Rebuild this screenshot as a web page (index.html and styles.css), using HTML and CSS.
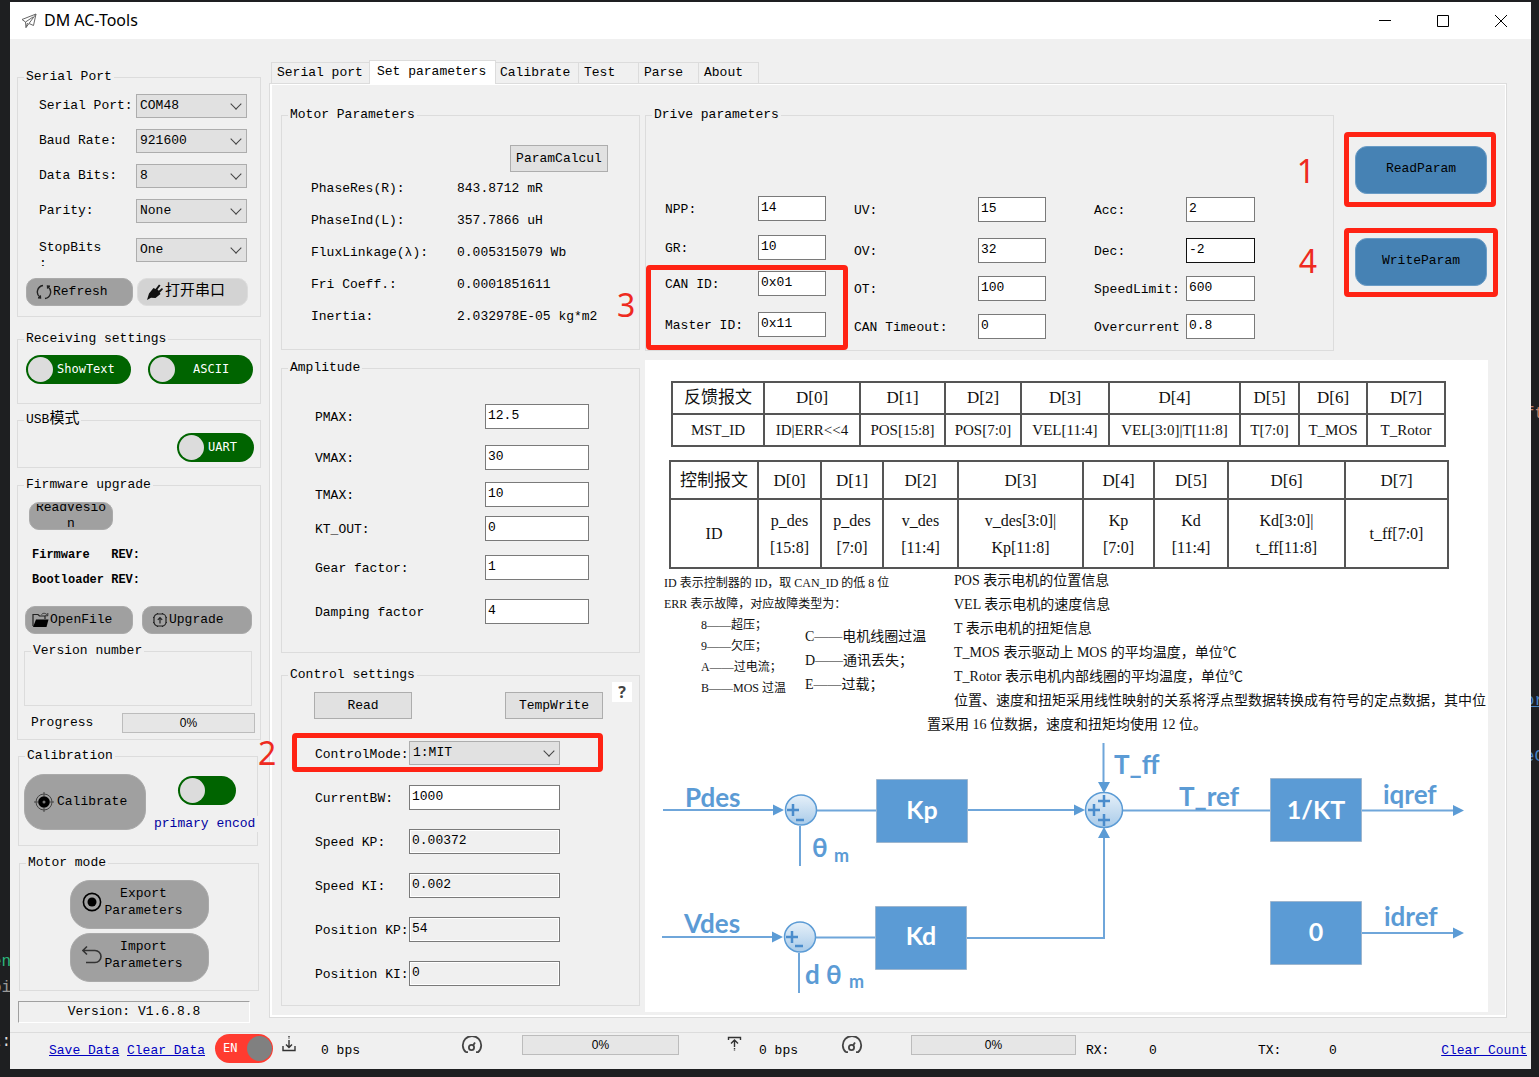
FILE: index.html
```html
<!DOCTYPE html>
<html lang="en">
<head>
<meta charset="utf-8">
<title>DM AC-Tools</title>
<link rel="stylesheet" href="styles.css">
</head>
<body>
<div class="desktop" aria-hidden="true">
  <span class="code code-green">en</span>
  <span class="code code-grey">oi</span>
  <span class="code code-white">t:</span>
  <span class="code code-orange">ft</span>
  <span class="code code-link">or</span>
  <span class="code code-blue">eC</span>
</div>
<div class="window">
  <header class="titlebar">
    <svg class="app-icon" viewBox="0 0 16 16" width="16" height="16" fill="none" stroke="#666" stroke-width="1"><path d="M1 6.500 15 1l-2.500 11.500-4.500-2-3 4-.5-5.500zM4.500 9 12 4M8 10.500 15 1M5 14.500l1.500-4.500"/></svg>
    <h1>DM AC-Tools</h1>
    <div class="window-buttons">
      <button type="button" aria-label="Minimize"><svg viewBox="0 0 14 14" width="14" height="14" stroke="#000"><path d="M1 6.500h12"/></svg></button>
      <button type="button" aria-label="Maximize"><svg viewBox="0 0 14 14" width="14" height="14" fill="none" stroke="#000"><path d="M1.500 1.500h11v11h-11z"/></svg></button>
      <button type="button" aria-label="Close"><svg viewBox="0 0 14 14" width="14" height="14" stroke="#000"><path d="M1 1l12 12M13 1 1 13"/></svg></button>
    </div>
  </header>

  <div class="workspace">
    <aside class="sidebar">
      <fieldset>
        <legend>Serial Port</legend>
        <div class="port-body">
          <div class="port-grid">
            <label for="port">Serial Port:</label>
            <span class="select"><select id="port"><option>COM48</option></select></span>
            <label for="baud">Baud Rate:</label>
            <span class="select"><select id="baud"><option>921600</option></select></span>
            <label for="bits">Data Bits:</label>
            <span class="select"><select id="bits"><option>8</option></select></span>
            <label for="parity">Parity:</label>
            <span class="select"><select id="parity"><option>None</option></select></span>
            <label for="stop" class="stop-label">StopBits :</label>
            <span class="select"><select id="stop"><option>One</option></select></span>
          </div>
          <div class="button-row">
            <button type="button" class="pill">
              <svg viewBox="0 0 16 16" width="16" height="16" fill="none" stroke="#222" stroke-width="1.400"><path d="M7 1.500A6.600 6.600 0 0 0 4 13.300M9 14.500A6.600 6.600 0 0 0 12 2.700"/><path d="M2 13.800 4.500 14l-.2-2.600M14 2.200 11.500 2l.2 2.600"/></svg>
              Refresh</button>
            <button type="button" class="pill pill-light">
              <svg viewBox="0 0 16 16" width="16" height="16"><path d="M0 16 2 9.500 6.500 4l2 1L12 .5l1.500 1-3 4 1.300 1.200L15 4l1 1.200-3.300 3.500.8 1.300-5 4L4 13.800z" fill="#111"/></svg>
              打开串口</button>
          </div>
        </div>
      </fieldset>

      <fieldset class="receiving">
        <legend>Receiving settings</legend>
        <div class="toggle-row">
          <label class="toggle"><input type="checkbox"><span class="knob"></span><span class="toggle-text">ShowText</span></label>
          <label class="toggle"><input type="checkbox"><span class="knob"></span><span class="toggle-text toggle-text-far">ASCII</span></label>
        </div>
      </fieldset>

      <fieldset class="usb">
        <legend>USB<span class="han">模式</span></legend>
        <div class="usb-row">
          <label class="toggle toggle-medium"><input type="checkbox"><span class="knob"></span><span class="toggle-text">UART</span></label>
        </div>
      </fieldset>

      <fieldset class="firmware">
        <legend>Firmware upgrade</legend>
        <div class="firmware-body">
          <button type="button" class="pill version-button"><span>ReadVesion</span></button>
          <p class="rev">Firmware   REV:</p>
          <p class="rev">Bootloader REV:</p>
          <div class="button-row">
            <button type="button" class="pill">
              <svg viewBox="0 0 17 16" width="17" height="16"><path d="M1 14V2.500h5l1.500 1.500H13v3" fill="none" stroke="#222" stroke-width="1.200"/><path d="M1 15 4 7.500h12.500L14.500 15z" fill="#000"/><path d="M9.500 2.500C11 .8 14 .8 15.500 3.500M15.800 1v2.800H13" fill="none" stroke="#333"/></svg>
              OpenFile</button>
            <button type="button" class="pill pill-upgrade">
              <svg viewBox="0 0 16 16" width="16" height="16" fill="none" stroke="#222" stroke-width="1.200"><rect x="2" y="2" width="12" height="12" rx="4"/><path d="M8 11.500V6M5.800 7.800 8 5.500l2.200 2.300"/><path d="M5.500 1v1M10.500 1v1M5.500 14v1M10.500 14v1M1 5.500h1M1 10.500h1M14 5.500h1M14 10.500h1"/></svg>
              Upgrade</button>
          </div>
          <fieldset class="version-box"><legend>Version number</legend></fieldset>
          <div class="progress-row">
            <span id="progress-label">Progress</span>
            <div class="progress" role="progressbar" aria-labelledby="progress-label" aria-valuenow="0">0%</div>
          </div>
        </div>
      </fieldset>

      <fieldset class="calibration">
        <legend>Calibration</legend>
        <div class="calibration-body">
          <button type="button" class="pill big-pill">
            <svg viewBox="0 0 20 20" width="20" height="20"><circle cx="10" cy="10" r="8" fill="none" stroke="#444"/><circle cx="10" cy="10" r="5.800" fill="#000"/><circle cx="10" cy="10" r="1.500" fill="#777"/><path d="M10 0v4M10 16v4M0 10h4M16 10h4" stroke="#444"/></svg>
            Calibrate</button>
          <div class="encoder">
            <label class="toggle toggle-small"><input type="checkbox" aria-label="primary encoder"><span class="knob"></span></label>
            <span class="encoder-name">primary encod</span>
          </div>
        </div>
      </fieldset>

      <fieldset class="motor-mode">
        <legend>Motor mode</legend>
        <div class="motor-body">
          <button type="button" class="pill motor-button">
            <svg viewBox="0 0 20 20" width="20" height="20"><circle cx="10" cy="10" r="8.600" fill="none" stroke="#000" stroke-width="1.600"/><circle cx="10" cy="10" r="4.500"/></svg>
            <span>Export<br>Parameters</span></button>
          <button type="button" class="pill motor-button">
            <svg viewBox="0 0 20 20" width="20" height="20" fill="none" stroke="#333" stroke-width="1.600"><path d="M5 1.500.8 5.500 5 9.500M1 5.500h12a6 6 0 0 1 0 12H4"/></svg>
            <span>Import<br>Parameters</span></button>
        </div>
      </fieldset>
      <p class="version">Version: V1.6.8.8</p>
    </aside>

    <main class="content">
      <div class="tabs" role="tablist">
        <button type="button" role="tab" class="tab tab-first">Serial port</button>
        <button type="button" role="tab" class="tab tab-active" aria-selected="true">Set parameters</button>
        <button type="button" role="tab" class="tab tab-calibrate">Calibrate</button>
        <button type="button" role="tab" class="tab">Test</button>
        <button type="button" role="tab" class="tab">Parse</button>
        <button type="button" role="tab" class="tab">About</button>
      </div>

      <div class="panel">
        <div class="left-column">
          <fieldset class="motor-params">
            <legend>Motor Parameters</legend>
            <div class="motor-params-body">
              <button type="button" class="button">ParamCalcul</button>
              <dl>
                <dt>PhaseRes(R):</dt><dd>843.8712 mR</dd>
                <dt>PhaseInd(L):</dt><dd>357.7866 uH</dd>
                <dt>FluxLinkage(λ):</dt><dd>0.005315079 Wb</dd>
                <dt>Fri Coeff.:</dt><dd>0.0001851611</dd>
                <dt>Inertia:</dt><dd>2.032978E-05 kg*m2</dd>
              </dl>
            </div>
          </fieldset>

          <fieldset class="amplitude">
            <legend>Amplitude</legend>
            <div class="amplitude-grid">
              <label for="pmax">PMAX:</label><input id="pmax" type="text" value="12.5">
              <label for="vmax">VMAX:</label><input id="vmax" type="text" value="30">
              <label for="tmax">TMAX:</label><input id="tmax" type="text" value="10">
              <label for="kt">KT_OUT:</label><input id="kt" type="text" value="0">
              <label for="gear">Gear factor:</label><input id="gear" type="text" value="1">
              <label for="damping">Damping factor</label><input id="damping" type="text" value="4">
            </div>
          </fieldset>

          <fieldset class="control">
            <legend>Control settings</legend>
            <button type="button" class="help" aria-label="Help">?</button>
            <div class="control-buttons">
              <button type="button" class="button">Read</button>
              <button type="button" class="button">TempWrite</button>
            </div>
            <div class="control-grid">
              <label for="mode">ControlMode:</label>
              <span class="select"><select id="mode"><option>1:MIT</option></select></span>
              <label for="bw">CurrentBW:</label><input id="bw" type="text" value="1000">
              <label for="skp">Speed KP:</label><input id="skp" type="text" value="0.00372" readonly>
              <label for="ski">Speed KI:</label><input id="ski" type="text" value="0.002" readonly>
              <label for="pkp">Position KP:</label><input id="pkp" type="text" value="54" readonly>
              <label for="pki">Position KI:</label><input id="pki" type="text" value="0" readonly>
            </div>
          </fieldset>
        </div>

        <div class="right-column">
          <div class="drive-row">
            <fieldset class="drive">
              <legend>Drive parameters</legend>
              <div class="drive-body">
                <div class="drive-col drive-ids">
                  <label for="npp">NPP:</label><input id="npp" type="text" value="14">
                  <label for="gr">GR:</label><input id="gr" type="text" value="10">
                  <label for="canid">CAN ID:</label><input id="canid" type="text" value="0x01">
                  <label for="master">Master ID:</label><input id="master" type="text" value="0x11">
                </div>
                <div class="drive-col drive-limits">
                  <label for="uv">UV:</label><input id="uv" type="text" value="15">
                  <label for="ov">OV:</label><input id="ov" type="text" value="32">
                  <label for="ot">OT:</label><input id="ot" type="text" value="100">
                  <label for="timeout">CAN Timeout:</label><input id="timeout" type="text" value="0">
                </div>
                <div class="drive-col drive-motion">
                  <label for="acc">Acc:</label><input id="acc" type="text" value="2">
                  <label for="dec">Dec:</label><input id="dec" type="text" class="hot" value="-2">
                  <label for="speed">SpeedLimit:</label><input id="speed" type="text" value="600">
                  <label for="over">Overcurrent</label><input id="over" type="text" value="0.8">
                </div>
              </div>
            </fieldset>
            <div class="actions">
              <button type="button" class="action">ReadParam</button>
              <button type="button" class="action">WriteParam</button>
            </div>
          </div>

          <figure class="reference">
            <table class="frame feedback">
              <tr><th>反馈报文</th><th>D[0]</th><th>D[1]</th><th>D[2]</th><th>D[3]</th><th>D[4]</th><th>D[5]</th><th>D[6]</th><th>D[7]</th></tr>
              <tr><td>MST_ID</td><td>ID|ERR&lt;&lt;4</td><td>POS[15:8]</td><td>POS[7:0]</td><td>VEL[11:4]</td><td>VEL[3:0]|T[11:8]</td><td>T[7:0]</td><td>T_MOS</td><td>T_Rotor</td></tr>
            </table>
            <table class="frame command">
              <tr><th>控制报文</th><th>D[0]</th><th>D[1]</th><th>D[2]</th><th>D[3]</th><th>D[4]</th><th>D[5]</th><th>D[6]</th><th>D[7]</th></tr>
              <tr><td>ID</td><td>p_des<br>[15:8]</td><td>p_des<br>[7:0]</td><td>v_des<br>[11:4]</td><td>v_des[3:0]|<br>Kp[11:8]</td><td>Kp<br>[7:0]</td><td>Kd<br>[11:4]</td><td>Kd[3:0]|<br>t_ff[11:8]</td><td>t_ff[7:0]</td></tr>
            </table>
            <div class="notes">
              <div class="notes-errors">
                <p>ID 表示控制器的 ID，取 CAN_ID 的低 8 位</p>
                <p>ERR 表示故障，对应故障类型为：</p>
                <div class="error-lists">
                  <ul class="errors-small"><li>8——超压；</li><li>9——欠压；</li><li>A——过电流；</li><li>B——MOS 过温</li></ul>
                  <ul class="errors-large"><li>C——电机线圈过温</li><li>D——通讯丢失；</li><li>E——过载；</li></ul>
                </div>
              </div>
              <div class="notes-fields">
                <p>POS 表示电机的位置信息</p>
                <p>VEL 表示电机的速度信息</p>
                <p>T 表示电机的扭矩信息</p>
                <p>T_MOS 表示驱动上 MOS 的平均温度，单位℃</p>
                <p>T_Rotor 表示电机内部线圈的平均温度，单位℃</p>
                <p>位置、速度和扭矩采用线性映射的关系将浮点型数据转换成有符号的定点数据，其中位<br>置采用 16 位数据，速度和扭矩均使用 12 位。</p>
              </div>
            </div>
            <svg class="diagram" viewBox="645 737 843 275" role="img" aria-label="MIT control loop">
              <defs>
                <linearGradient id="sum" x1="0" y1="0" x2="0" y2="1"><stop offset="0" stop-color="#e6f0f9"/><stop offset="1" stop-color="#a9cbe9"/></linearGradient>
              </defs>
              <g fill="none" stroke="#6fa6da" stroke-width="2">
                <path d="M663 810h114M817 810.500h60M967 810h110M1123 810.500h147M1362 810.500h92M662 937h114M816 937.500h60M966 938h138V836M800 826v40M799 953v40M1103.500 743v48M1362 933h92"/>
              </g>
              <g fill="#5b9bd5">
                <path d="M773 804.500v11l11-5.500zM772 931.500v11l11-5.500zM1074 804.500v11l11-5.500zM1098 782h12l-6 11zM1098 838h12l-6-11zM1453 805v11l11-5.500zM1453 927.500v11l11-5.500z"/>
              </g>
              <g fill="url(#sum)" stroke="#5b9bd5" stroke-width="1.500">
                <ellipse cx="801" cy="810" rx="15.500" ry="15"/><ellipse cx="800" cy="937" rx="15.500" ry="15"/><ellipse cx="1104" cy="810" rx="18.500" ry="17.500"/>
              </g>
              <path d="M787 810h12M793 804v12M796 820h8M786 937h12M792 931v12M795 946h8M1098 801h12M1104 795v12M1088 810h12M1094 804v12M1098 820h12M1104 814v12" stroke="#4a8ccc" stroke-width="2.500"/>
              <g fill="#5b9bd5" stroke="#9db6cf" stroke-width="1">
                <path d="M876.500 779.500h91v63h-91zM875.500 906.500h91v63h-91zM1270.500 778.500h91v63h-91zM1270.500 901.500h91v63h-91z"/>
              </g>
              <g class="signal">
                <text x="685" y="807">Pdes</text><text x="684" y="933">Vdes</text>
                <text x="812" y="857">θ</text><text x="805" y="984">d θ</text>
                <text x="1114" y="774">T_ff</text><text x="1179" y="806">T_ref</text>
                <text x="1383" y="804">iqref</text><text x="1384" y="926">idref</text>
                <text class="sub" x="834" y="862">m</text><text class="sub" x="849" y="988">m</text>
              </g>
              <g class="block">
                <text x="922" y="819">Kp</text><text x="921" y="945">Kd</text><text x="1316" y="819">1/KT</text><text x="1316" y="941">0</text>
              </g>
            </svg>
          </figure>
        </div>

        <span class="mark mark-read"></span><span class="step step-1">1</span>
        <span class="mark mark-mode"></span><span class="step step-2">2</span>
        <span class="mark mark-ids"></span><span class="step step-3">3</span>
        <span class="mark mark-write"></span><span class="step step-4">4</span>
      </div>
    </main>
  </div>

  <footer class="statusbar">
    <a href="#save">Save Data</a>
    <a href="#clear">Clear Data</a>
    <label class="toggle toggle-language"><input type="checkbox" checked><span class="toggle-text">EN</span><span class="knob"></span></label>
    <svg class="status-icon" viewBox="0 0 16 16" width="16" height="16" fill="none" stroke="#333" stroke-width="1.400"><path d="M2 10v4.500h12V10M8 4v7M5 8.500l3 3 3-3"/><path d="M8 0v3" stroke-dasharray="1.500 1"/></svg>
    <span>0 bps</span>
    <svg class="status-icon" viewBox="0 0 22 18" width="22" height="18" fill="none" stroke="#444" stroke-width="1.800"><path d="M5 16.200A9.200 9.200 0 1 1 17 16.200h-2M5 16.200h2"/><circle cx="10.500" cy="11.500" r="2.600"/><path d="M12 9.500 14 6.500"/></svg>
    <div class="progress" role="progressbar" aria-label="Receive load" aria-valuenow="0">0%</div>
    <svg class="status-icon" viewBox="0 0 16 16" width="16" height="16" fill="none" stroke="#333" stroke-width="1.400"><path d="M1.500 4V1.500h12V4M7.500 11V4M4 7.500 7.500 4 11 7.500"/><path d="M7.500 12v3" stroke-dasharray="1.500 1"/></svg>
    <span>0 bps</span>
    <svg class="status-icon" viewBox="0 0 22 18" width="22" height="18" fill="none" stroke="#444" stroke-width="1.800"><path d="M5 16.200A9.200 9.200 0 1 1 17 16.200h-2M5 16.200h2"/><circle cx="10.500" cy="11.500" r="2.600"/><path d="M12 9.500 14 6.500"/></svg>
    <div class="progress progress-send" role="progressbar" aria-label="Send load" aria-valuenow="0">0%</div>
    <span>RX:</span><span>0</span><span>TX:</span><span>0</span>
    <a href="#count">Clear Count</a>
  </footer>
</div>
</body>
</html>
```
FILE: styles.css
```css
* { box-sizing: border-box; }

body {
  position: relative;
  margin: 0;
  min-height: 100vh;
  padding: 2px 8px 8px 10px;
  overflow-x: hidden;
  background: #1e1f21;
  color: #000;
  font: 13px/16px "Liberation Mono", "Noto Sans CJK SC", monospace;
}

p, dl, dd, ul, figure { margin: 0; padding: 0; }
ul { list-style: none; }
svg { flex: none; }

button, input, select { margin: 0; font: inherit; color: inherit; }

a { color: #0000c0; }

/* Editor text behind the window */
.code { position: absolute; font-size: 16px; }
.code-green { left: -8px; top: 954px; color: #2cb67d; }
.code-grey { left: -8px; top: 980px; color: #999; }
.code-white { left: -8px; top: 1034px; color: #ddd; }
.code-orange { right: -5px; top: 406px; color: #c58570; }
.code-link { right: -5px; top: 693px; color: #4a86c5; text-decoration: underline; }
.code-blue { right: -5px; top: 749px; color: #4a86c5; }

.window {
  position: relative;
  display: flex;
  flex-direction: column;
  min-height: calc(100vh - 10px);
  background: #f0f0f0;
}

/* Title bar */
.titlebar {
  display: flex;
  align-items: center;
  height: 37px;
  padding-left: 11px;
  background: #fff;
}
.titlebar h1 {
  flex: 1;
  margin: 0 0 1px 7px;
  font: 16px/20px "Noto Sans", sans-serif;
}
.window-buttons { display: flex; margin-right: 1px; }
.window-buttons button {
  display: grid;
  place-items: center;
  width: 58px;
  height: 36px;
  padding: 0;
  border: 0;
  background: none;
}

.workspace {
  flex: 1;
  display: grid;
  grid-template-columns: 244px 1fr;
  gap: 8px;
  padding: 0 24px 9px 7px;
}

/* Group boxes */
fieldset {
  min-width: 0;
  margin: 0;
  padding: 0;
  border: 1px solid #dcdcdc;
}
legend { margin-left: 6px; padding: 0 2px; }
.han { font-size: 15px; }

/* Drop-downs and text boxes */
.select { position: relative; display: block; height: 24px; }
.select select {
  appearance: none;
  width: 100%;
  height: 24px;
  padding: 0 20px 0 3px;
  border: 1px solid #adadad;
  border-radius: 0;
  background: #e1e1e1;
}
.select::after {
  content: "";
  position: absolute;
  right: 7px;
  top: 6px;
  width: 7px;
  height: 7px;
  border: solid #444;
  border-width: 0 1px 1px 0;
  transform: rotate(45deg);
  pointer-events: none;
}
input[type="text"] {
  width: 100%;
  height: 25px;
  padding: 0 2px 2px;
  border: 1px solid #7a7a7a;
  background: #fff;
}
input[readonly] { background: #f0f0f0; box-shadow: inset 0 0 0 1px #fff; }
input.hot { border-color: #111; }

/* Buttons */
.pill {
  display: flex;
  align-items: center;
  height: 28px;
  padding: 0 0 0 9px;
  gap: 1px;
  border: 1px solid #aaa;
  border-radius: 10px;
  background: #a0a0a0;
  white-space: nowrap;
}
.pill-light { background: #d3d3d3; border-color: #dcdcdc; font-size: 15px; gap: 2px; }
.button {
  width: 98px;
  height: 27px;
  padding: 0;
  border: 1px solid #adadad;
  background: #e1e1e1;
}

/* Switches */
.toggle {
  display: flex;
  align-items: center;
  width: 105px;
  height: 29px;
  padding: 0 2px;
  border-radius: 15px;
  background: #006400;
  color: #fff;
  font: 12px/16px "DejaVu Sans Mono", monospace;
}
.toggle input {
  appearance: none;
  width: 0;
  height: 0;
  margin: 0;
}
.knob { flex: none; width: 25px; height: 25px; border-radius: 50%; background: #dcdcdc; }
.toggle-text { margin: 0 0 2px 4px; }
.toggle-text-far { margin-left: 18px; }
.toggle-medium { width: 77px; }
.toggle-small { width: 58px; }
.toggle-language { width: 58px; padding: 0 1px 0 4px; background: #ff3b30; }
.toggle-language .knob { margin-left: auto; background: #808080; }

.progress {
  height: 20px;
  border: 1px solid #bcbcbc;
  background: #e6e6e6;
  font: 12px/18px "Liberation Sans", sans-serif;
  text-align: center;
}

/* Sidebar */
.sidebar { padding-top: 30px; }
.sidebar > fieldset { margin-bottom: 9px; }
.port-body { padding: 9px 0 10px 8px; }
.port-grid {
  display: grid;
  grid-template-columns: 97px 111px;
  row-gap: 11px;
  align-items: center;
  padding-left: 13px;
  margin-bottom: 12px;
}
.port-grid label { margin-right: -4px; }
.port-grid .stop-label {
  width: 72px;
  height: 32px;
  padding-top: 6px;
  overflow: hidden;
}
.button-row { display: grid; grid-template-columns: 107px 111px; gap: 4px; }

.toggle-row { display: flex; gap: 17px; padding: 8px 0 19px 8px; }
.sidebar > .receiving { margin: 14px 0 8px; }
.usb-row { display: flex; justify-content: flex-end; padding: 5px 6px; }

.sidebar > .firmware { margin-bottom: 8px; }
.firmware-body { padding: 9px 5px 6px 6px; }
.version-button {
  width: 84px;
  margin-left: 5px;
  padding: 0;
  justify-content: center;
}
.version-button span {
  display: flex;
  align-items: center;
  width: 72px;
  height: 24px;
  overflow: hidden;
  white-space: normal;
  word-break: break-all;
}
.rev { margin: 9px 0 0 8px; font-size: 12px; font-weight: bold; white-space: pre; }
.version-button + .rev { margin-top: 17px; }
.firmware .button-row { grid-template-columns: 108px 110px; gap: 9px; margin: 18px 0 9px 1px; }
.firmware .pill { padding-left: 6px; }
.firmware .version-button { padding: 0; }
.firmware .pill-upgrade { padding-left: 9px; }
.version-box { height: 63px; margin-right: 3px; }
.progress-row {
  display: grid;
  grid-template-columns: 91px 133px;
  align-items: center;
  padding: 7px 0 0 7px;
}

.sidebar > .calibration { margin: 0 3px 9px 1px; }
.calibration-body { display: flex; gap: 8px; padding: 10px 0 13px 5px; }
.big-pill { width: 122px; height: 56px; padding-left: 9px; gap: 3px; border-radius: 20px; }
.encoder { flex: 1; padding-top: 2px; margin-right: -1px; }
.encoder .toggle { margin: 0 0 11px 24px; }
.encoder-name { display: block; background: #f0f0f0; color: #0000a0; white-space: nowrap; }

.sidebar > .motor-mode { margin: 0 2px 10px; }
.motor-body {
  display: flex;
  flex-direction: column;
  align-items: center;
  gap: 4px;
  padding: 9px 0 8px;
}
.motor-button { width: 139px; height: 49px; padding: 0 0 5px 11px; gap: 3px; border-radius: 20px; line-height: 17px; }
.version {
  width: 232px;
  margin-left: 1px;
  padding: 2px 0;
  border: 1px solid;
  border-color: #a0a0a0 #fff #fff #a0a0a0;
  text-align: center;
}

/* Tabs */
.content { display: flex; flex-direction: column; min-width: 0; padding: 21px 0 5px; }
.tabs { position: relative; z-index: 1; display: flex; align-items: flex-end; padding-left: 2px; }
.tab {
  width: 60px;
  height: 21px;
  padding: 0 0 0 5px;
  border: 1px solid #dcdcdc;
  border-width: 1px 1px 0 0;
  background: #f0f0f0;
  text-align: left;
}
.tab-first { width: 98px; border-left-width: 1px; border-right: 0; }
.tab-calibrate { width: 83px; padding-left: 4px; }
.tab-active {
  width: 127px;
  height: 24px;
  margin-bottom: -1px;
  padding: 0 0 1px 7px;
  border-left-width: 1px;
  background: #fff;
}

.panel {
  position: relative;
  flex: 1;
  display: grid;
  grid-template-columns: 359px 1fr;
  gap: 5px;
  padding: 23px 18px 5px 11px;
  border: 1px solid #dcdcdc;
  box-shadow: inset 2px -2px 0 #fff, inset -1px 1px 0 #fff;
}

.motor-params-body { padding: 22px 31px 24px 29px; }
.motor-params .button { display: block; margin-left: auto; }
.motor-params dl {
  display: grid;
  grid-template-columns: 146px 1fr;
  row-gap: 16px;
  margin-top: 9px;
  white-space: nowrap;
}

.amplitude { margin: 10px 0 14px; }
.amplitude-grid {
  display: grid;
  grid-template-columns: 170px 104px;
  grid-template-rows: 41px 37px 34px 39px 44px 25px;
  padding: 28px 0 28px 33px;
}
.amplitude-grid label, .control-grid label, .drive-col label { line-height: 27px; white-space: nowrap; }

.control { position: relative; }
.help {
  position: absolute;
  right: 7px;
  top: -1px;
  width: 20px;
  height: 20px;
  padding: 0;
  border: 0;
  background: #fff;
  color: #444;
  font: bold 16px/20px "Open Sans", sans-serif;
}
.control-buttons { display: flex; justify-content: space-between; padding: 9px 36px 0 32px; }
.control-grid {
  display: grid;
  grid-template-columns: 94px 151px;
  grid-auto-rows: 25px;
  row-gap: 19px;
  padding: 22px 0 19px 33px;
}

/* Drive parameters */
.right-column { display: flex; flex-direction: column; gap: 9px; min-width: 0; }
.drive-row { display: flex; height: 244px; }
.drive { flex: 1; }
.drive-body { display: flex; padding: 73px 0 0 19px; }
.drive-col { display: grid; align-content: start; }
.drive-ids { grid-template: 39px 36px 41px 25px / 93px 68px; margin-right: 28px; }
.drive-limits { grid-template: 41px 38px 38px 25px / 124px 68px; margin-right: 48px; padding-top: 1px; }
.drive-motion { grid-template: 41px 38px 38px 25px / 92px 69px; padding-top: 1px; }
.actions { display: flex; flex-direction: column; gap: 44px; padding: 39px 1px 0 21px; }
.action {
  width: 132px;
  height: 48px;
  padding: 0 0 2px;
  border: 1px solid #6a9cc6;
  border-radius: 12px;
  background: #4682b4;
}

/* Protocol reference */
.reference {
  flex: 1;
  padding-top: 21px;
  background: #fff;
  color: #111;
  font-family: "Liberation Serif", "Noto Sans CJK SC", serif;
}
.frame { table-layout: fixed; border-collapse: collapse; text-align: center; white-space: nowrap; }
.frame th, .frame td { padding: 0; border: 2px solid #555; font-weight: 400; }
.frame th { font-size: 17px; }
.feedback { width: calc(100% - 69px); margin: 0 0 13px 26px; font-size: 15px; }
.feedback tr { height: 32px; }
.feedback th:nth-child(1) { width: 92px; }
.feedback th:nth-child(2) { width: 96px; }
.feedback th:nth-child(3) { width: 85px; }
.feedback th:nth-child(4) { width: 76px; }
.feedback th:nth-child(5) { width: 88px; }
.feedback th:nth-child(6) { width: 131px; }
.feedback th:nth-child(7) { width: 59px; }
.feedback th:nth-child(8) { width: 68px; }
.feedback th:nth-child(9) { width: 78px; }
.command { width: calc(100% - 65px); margin-left: 24px; font-size: 16px; line-height: 27px; }
.command tr:first-child { height: 38px; }
.command tr:last-child { height: 69px; }
.command th:nth-child(1) { width: 88px; }
.command th:nth-child(2) { width: 63px; }
.command th:nth-child(3) { width: 62px; }
.command th:nth-child(4) { width: 75px; }
.command th:nth-child(5) { width: 125px; }
.command th:nth-child(6) { width: 71px; }
.command th:nth-child(7) { width: 74px; }
.command th:nth-child(8) { width: 117px; }
.command th:nth-child(9) { width: 103px; }

.notes {
  display: grid;
  grid-template-columns: 263px 1fr;
  padding-left: 19px;
  white-space: nowrap;
}
.notes-errors { padding-top: 4px; font-size: 12px; line-height: 21px; }
.error-lists { display: flex; gap: 19px; padding-left: 37px; }
.errors-small { width: 85px; overflow: hidden; }
.errors-large { padding-top: 10px; font-size: 14px; line-height: 24px; }
.notes-fields { font-size: 14px; line-height: 24px; }
.notes-fields p { text-indent: 27px; }

.diagram { display: block; width: 100%; }
.signal { fill: #5b9bd5; font: bold 26px Lato, sans-serif; }
.signal .sub { font-size: 18px; }
.block { fill: #fff; font: bold 25px Lato, sans-serif; text-anchor: middle; }

/* Step callouts laid over the panel */
.mark { position: absolute; border: 5px solid #ff2314; border-radius: 4px; pointer-events: none; }
.mark-read { right: 10px; top: 48px; width: 152px; height: 75px; }
.mark-write { right: 8px; top: 144px; width: 154px; height: 69px; }
.mark-ids { left: 376px; top: 181px; width: 202px; height: 85px; }
.mark-mode { left: 22px; top: 649px; width: 311px; height: 39px; }
.step { position: absolute; color: #ee2a20; font: 32px/32px "Noto Sans", sans-serif; }
.step-1 { right: 191px; top: 71px; }
.step-4 { right: 189px; top: 161px; }
.step-3 { left: 347px; top: 205px; }
.step-2 { left: -12px; top: 653px; }

/* Status bar */
.statusbar {
  display: grid;
  grid-template-columns: 78px 88px 66px 40px 140px 61px 205px 32px 82px 70px 175px 63px 109px 71px 1fr auto;
  height: 37px;
  padding: 1px 4px 0 39px;
  border-top: 1px solid #dcdcdc;
  line-height: 33px;
  white-space: nowrap;
}
.status-icon { margin-top: 2px; }
.statusbar .progress { width: 157px; margin-top: 1px; }
.statusbar .progress-send { width: 165px; }
```
